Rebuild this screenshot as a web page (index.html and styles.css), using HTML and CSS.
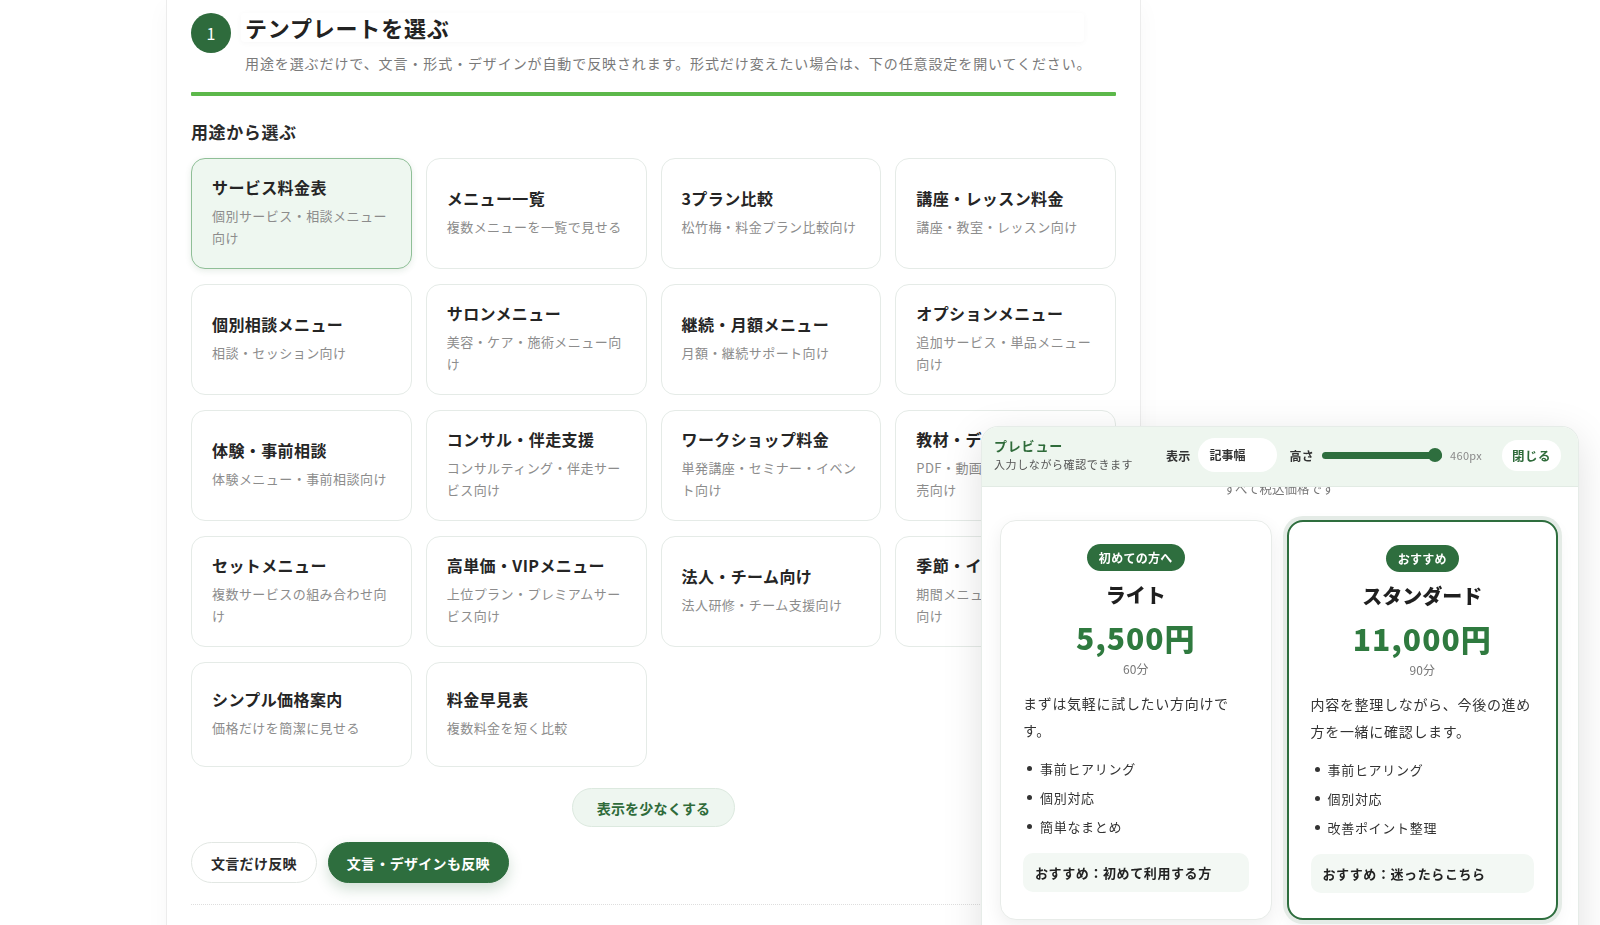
FILE: index.html
```html
<!DOCTYPE html>
<html lang="ja">
<head>
<meta charset="utf-8">
<title>テンプレートを選ぶ</title>
<link rel="stylesheet" href="styles.css">
</head>
<body>
<div class="page">
  <section class="step-card">
    <header class="step-head">
      <div class="step-num">1</div>
      <div class="step-titles">
        <h2 class="step-title">テンプレートを選ぶ</h2>
        <p class="step-desc">用途を選ぶだけで、文言・形式・デザインが自動で反映されます。形式だけ変えたい場合は、下の任意設定を開いてください。</p>
      </div>
    </header>
    <div class="accent-line"></div>
    <h3 class="group-label">用途から選ぶ</h3>
    <div class="tpl-grid">
      <button class="tpl is-active"><span class="tpl-name">サービス料金表</span><span class="tpl-sub">個別サービス・相談メニュー向け</span></button>
      <button class="tpl"><span class="tpl-name">メニュー一覧</span><span class="tpl-sub">複数メニューを一覧で見せる</span></button>
      <button class="tpl"><span class="tpl-name">3プラン比較</span><span class="tpl-sub">松竹梅・料金プラン比較向け</span></button>
      <button class="tpl"><span class="tpl-name">講座・レッスン料金</span><span class="tpl-sub">講座・教室・レッスン向け</span></button>

      <button class="tpl"><span class="tpl-name">個別相談メニュー</span><span class="tpl-sub">相談・セッション向け</span></button>
      <button class="tpl"><span class="tpl-name">サロンメニュー</span><span class="tpl-sub">美容・ケア・施術メニュー向け</span></button>
      <button class="tpl"><span class="tpl-name">継続・月額メニュー</span><span class="tpl-sub">月額・継続サポート向け</span></button>
      <button class="tpl"><span class="tpl-name">オプションメニュー</span><span class="tpl-sub">追加サービス・単品メニュー向け</span></button>

      <button class="tpl"><span class="tpl-name">体験・事前相談</span><span class="tpl-sub">体験メニュー・事前相談向け</span></button>
      <button class="tpl"><span class="tpl-name">コンサル・伴走支援</span><span class="tpl-sub">コンサルティング・伴走サービス向け</span></button>
      <button class="tpl"><span class="tpl-name">ワークショップ料金</span><span class="tpl-sub">単発講座・セミナー・イベント向け</span></button>
      <button class="tpl"><span class="tpl-name">教材・デジタル商品</span><span class="tpl-sub">PDF・動画・テンプレート販売向け</span></button>

      <button class="tpl"><span class="tpl-name">セットメニュー</span><span class="tpl-sub">複数サービスの組み合わせ向け</span></button>
      <button class="tpl"><span class="tpl-name">高単価・VIPメニュー</span><span class="tpl-sub">上位プラン・プレミアムサービス向け</span></button>
      <button class="tpl"><span class="tpl-name">法人・チーム向け</span><span class="tpl-sub">法人研修・チーム支援向け</span></button>
      <button class="tpl"><span class="tpl-name">季節・イベント限定</span><span class="tpl-sub">期間メニュー・キャンペーン向け</span></button>

      <button class="tpl"><span class="tpl-name">シンプル価格案内</span><span class="tpl-sub">価格だけを簡潔に見せる</span></button>
      <button class="tpl"><span class="tpl-name">料金早見表</span><span class="tpl-sub">複数料金を短く比較</span></button>
    </div>
    <div class="more-row"><button class="more-btn">表示を少なくする</button></div>
    <div class="apply-row">
      <button class="btn-ghost">文言だけ反映</button>
      <button class="btn-primary">文言・デザインも反映</button>
    </div>
    <div class="dotted"></div>
    <div class="spacer"></div>
  </section>
</div>

<aside class="preview">
  <div class="pv-head">
    <div class="pv-titles">
      <div class="pv-title">プレビュー</div>
      <div class="pv-sub">入力しながら確認できます</div>
    </div>
    <div class="pv-controls">
      <span class="pv-label">表示</span>
      <span class="pv-select">記事幅</span>
      <span class="pv-label pv-label-gap">高さ</span>
      <span class="pv-slider"><span class="pv-thumb"></span></span>
      <span class="pv-value">460px</span>
      <button class="pv-close">閉じる</button>
    </div>
  </div>
  <div class="pv-body">
    <div class="pv-scroll">
      <p class="pv-caption">すべて税込価格です</p>
      <div class="plans">
        <div class="plan">
          <span class="plan-badge">初めての方へ</span>
          <div class="plan-name">ライト</div>
          <div class="plan-price">5,500円</div>
          <div class="plan-unit">60分</div>
          <p class="plan-desc">まずは気軽に試したい方向けです。</p>
          <ul class="plan-list">
            <li>事前ヒアリング</li>
            <li>個別対応</li>
            <li>簡単なまとめ</li>
          </ul>
          <div class="plan-rec">おすすめ：初めて利用する方</div>
        </div>
        <div class="plan plan-featured">
          <span class="plan-badge">おすすめ</span>
          <div class="plan-name">スタンダード</div>
          <div class="plan-price">11,000円</div>
          <div class="plan-unit">90分</div>
          <p class="plan-desc">内容を整理しながら、今後の進め方を一緒に確認します。</p>
          <ul class="plan-list">
            <li>事前ヒアリング</li>
            <li>個別対応</li>
            <li>改善ポイント整理</li>
          </ul>
          <div class="plan-rec">おすすめ：迷ったらこちら</div>
        </div>
      </div>
    </div>
  </div>
</aside>
</body>
</html>
```

FILE: styles.css
```css
* { box-sizing: border-box; }

html, body {
  margin: 0;
  height: 925px;
  overflow: hidden;
  background: #ffffff;
}

body {
  font-family: "Noto Sans CJK JP", "Noto Sans", sans-serif;
  color: #222;
}

button {
  font: inherit;
  color: inherit;
  cursor: pointer;
}

.page {
  padding-left: 166px;
}

.step-card {
  width: 975px;
  background: #fff;
  border: 1px solid #ececec;
  border-top: none;
  border-radius: 0 0 18px 18px;
  padding: 13px 24px 40px;
  box-shadow: 0 6px 24px rgba(0, 0, 0, 0.035);
}

.step-head {
  display: flex;
  align-items: flex-start;
  gap: 10px;
}

.step-num {
  flex: none;
  width: 40px;
  height: 40px;
  border-radius: 50%;
  background: #2e6b3c;
  color: #fff;
  font-size: 16px;
  line-height: 40px;
  text-align: center;
}

.step-titles {
  flex: 1;
}

.step-title {
  margin: 0;
  width: 843px;
  padding: 0 4px;
  font-size: 22px;
  line-height: 29px;
  font-weight: 700;
  letter-spacing: 0.8px;
  color: #222;
  border-radius: 4px;
  box-shadow: 0 1px 6px rgba(0, 0, 0, 0.035);
}

.step-desc {
  margin: 10px 0 0;
  padding-left: 4px;
  font-size: 14px;
  line-height: 22px;
  letter-spacing: 0.9px;
  color: #7a7a7a;
}

.accent-line {
  margin-top: 18px;
  height: 4px;
  background: #5cb84a;
  border-radius: 1px;
}

.group-label {
  margin: 24px 0 14px;
  font-size: 17px;
  line-height: 24px;
  font-weight: 700;
  letter-spacing: 0.6px;
  color: #2a2a2a;
}

.tpl-grid {
  display: grid;
  grid-template-columns: repeat(4, 1fr);
  column-gap: 14px;
  row-gap: 15px;
}

.tpl {
  display: flex;
  flex-direction: column;
  justify-content: center;
  align-items: flex-start;
  min-height: 105px;
  padding: 16.5px 20px 18.5px;
  text-align: left;
  background: #fff;
  border: 1px solid #e5ebe7;
  border-radius: 14px;
}

.tpl.is-active {
  background: #eef7f0;
  border-color: #8fbf97;
  box-shadow: 0 2px 6px rgba(46, 107, 60, 0.12);
}

.tpl-name {
  font-size: 16px;
  line-height: 22px;
  font-weight: 700;
  letter-spacing: 0.4px;
  color: #252525;
}

.tpl-sub {
  margin-top: 7px;
  font-size: 13px;
  line-height: 22.5px;
  letter-spacing: 0.45px;
  color: #8c8c8c;
}

.more-row {
  margin-top: 21px;
  display: flex;
  justify-content: center;
}

.more-btn {
  height: 39px;
  padding: 0 24px;
  border: 1px solid #dce9df;
  border-radius: 999px;
  background: #eef6f0;
  color: #2f6b3a;
  font-size: 14px;
  font-weight: 700;
  letter-spacing: 0.2px;
}

.apply-row {
  margin-top: 15px;
  display: flex;
  gap: 11px;
}

.btn-ghost,
.btn-primary {
  height: 41px;
  padding: 0 19px;
  border-radius: 999px;
  font-size: 14px;
  font-weight: 700;
  letter-spacing: 0.3px;
}

.btn-ghost {
  background: #fff;
  border: 1px solid #e2e7e3;
  color: #2a2a2a;
}

.btn-primary {
  background: #2e6e3e;
  border: 1px solid #2e6e3e;
  color: #fff;
  padding: 0 18px;
  box-shadow: 0 6px 14px rgba(46, 110, 62, 0.22);
}

.dotted {
  margin-top: 21px;
  border-top: 1.5px dotted #dedede;
}

.spacer {
  height: 120px;
}

/* Preview panel (floating over the page) */
.preview {
  position: fixed;
  left: 982px;
  top: 427px;
  width: 596px;
  height: 560px;
  background: #fff;
  border-radius: 16px;
  overflow: hidden;
  box-shadow: 0 0 0 1px #e6ece8, 0 10px 40px rgba(0, 0, 0, 0.13);
}

.pv-head {
  height: 60px;
  display: flex;
  align-items: center;
  padding: 0 17px 0 12px;
  background: #eef6ef;
  border-bottom: 1px solid #e2ebe4;
}

.pv-titles {
  padding-bottom: 5px;
}

.pv-title {
  font-size: 13px;
  line-height: 19px;
  font-weight: 700;
  letter-spacing: 0.8px;
  color: #2f6b3a;
}

.pv-sub {
  margin-top: 1px;
  font-size: 11px;
  line-height: 16px;
  letter-spacing: 0.6px;
  color: #555;
}

.pv-controls {
  margin-left: auto;
  display: flex;
  align-items: center;
  padding-bottom: 3px;
}

.pv-label {
  font-size: 12px;
  font-weight: 700;
  color: #333;
  letter-spacing: 0.3px;
}

.pv-label-gap {
  margin-left: 12px;
}

.pv-select {
  margin-left: 8px;
  width: 79px;
  height: 34px;
  padding-left: 11px;
  border-radius: 999px;
  background: #fff;
  font-size: 12px;
  font-weight: 700;
  line-height: 34px;
  color: #333;
}

.pv-slider {
  position: relative;
  margin-left: 8px;
  width: 120px;
  height: 7px;
  border-radius: 4px;
  background: #2e6e3e;
}

.pv-thumb {
  position: absolute;
  right: 0;
  top: -3.5px;
  width: 14px;
  height: 14px;
  border-radius: 50%;
  background: #2e6e3e;
}

.pv-value {
  margin-left: 8px;
  font-size: 11px;
  color: #8a8a8a;
  letter-spacing: 0.3px;
}

.pv-close {
  margin-left: 20px;
  width: 59px;
  height: 31px;
  border: none;
  border-radius: 999px;
  background: #fff;
  color: #2f6b3a;
  font-size: 12.5px;
  font-weight: 700;
  letter-spacing: 0.5px;
}

.pv-body {
  height: 500px;
  overflow: hidden;
  padding: 0 20px 0 18px;
}

.pv-scroll {
  margin-top: -8px;
}

.pv-caption {
  margin: 0;
  text-align: center;
  font-size: 12.5px;
  line-height: 20px;
  color: #777;
}

.plans {
  margin-top: 21px;
  display: grid;
  grid-template-columns: 1fr 1fr;
  gap: 15px;
}

.plan {
  display: flex;
  flex-direction: column;
  align-items: center;
  padding: 23px 22px 25px;
  background: #fff;
  border: 1px solid #e8ece9;
  border-radius: 16px;
  box-shadow: 0 6px 18px rgba(0, 0, 0, 0.07);
}

.plan-featured {
  border: 2.5px solid #2e6e3e;
  box-shadow: 0 0 0 4px #e4ebe6, 0 6px 18px rgba(0, 0, 0, 0.06);
}

.plan-badge {
  height: 27px;
  padding: 0 12px;
  border-radius: 999px;
  background: #2e6e3e;
  color: #fff;
  font-size: 12px;
  line-height: 27px;
  font-weight: 700;
  letter-spacing: 0.3px;
}

.plan-name {
  margin-top: 10px;
  font-size: 20px;
  line-height: 28px;
  font-weight: 900;
  color: #1f1f1f;
}

.plan-price {
  margin-top: 10px;
  font-size: 30px;
  line-height: 36px;
  font-weight: 800;
  letter-spacing: 1px;
  color: #2f7a3f;
}

.plan-unit {
  margin-top: 5px;
  font-size: 12px;
  line-height: 18px;
  color: #777;
}

.plan-desc {
  align-self: stretch;
  margin: 11.5px 0 0;
  font-size: 14px;
  line-height: 27px;
  letter-spacing: 0.7px;
  color: #333;
  text-align: left;
}

.plan-list {
  align-self: stretch;
  list-style: none;
  margin: 10px 0 0;
  padding: 0;
}

.plan-list li {
  display: flex;
  align-items: center;
  gap: 8px;
  font-size: 13px;
  line-height: 29px;
  letter-spacing: 0.7px;
  color: #333;
}

.plan-list li::before {
  content: "";
  flex: none;
  margin-left: 4px;
  width: 5px;
  height: 5px;
  border-radius: 50%;
  background: #333;
}

.plan-rec {
  align-self: stretch;
  margin-top: 12.5px;
  height: 39px;
  padding-left: 12px;
  border-radius: 10px;
  background: #f3f8f4;
  font-size: 13px;
  line-height: 39px;
  font-weight: 700;
  letter-spacing: 0.6px;
  color: #222;
}
```
